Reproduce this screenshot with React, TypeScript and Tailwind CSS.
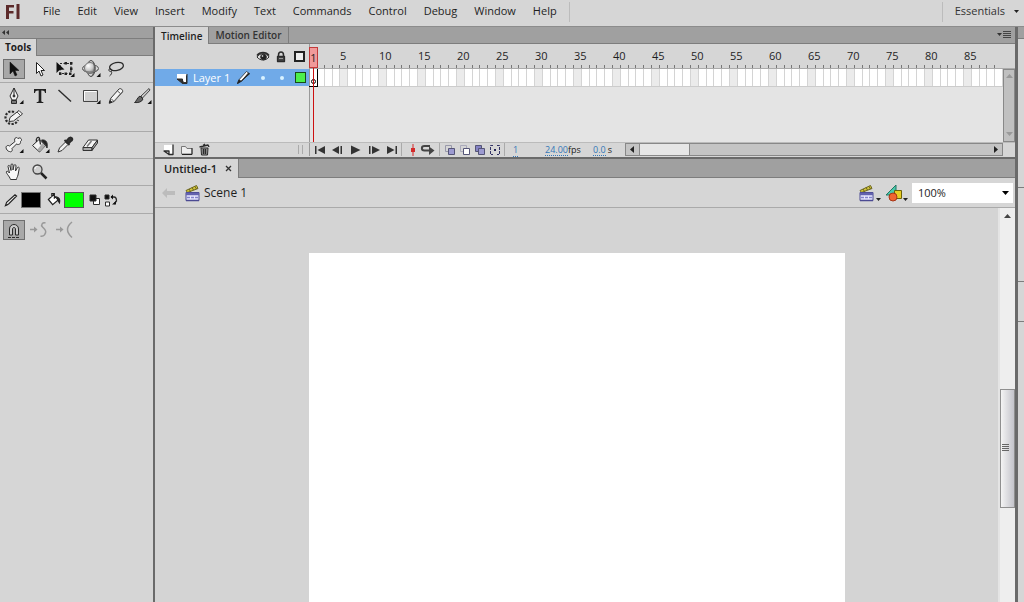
import React, { useState } from 'react';

const MENUS = ['File', 'Edit', 'View', 'Insert', 'Modify', 'Text', 'Commands', 'Control', 'Debug', 'Window', 'Help'];

// First frame of every numbered group on the ruler
const GROUPS = Array.from({ length: 17 }, (_, i) => (i + 1) * 5);

interface IconProps {
  children: React.ReactNode;
  size?: number;
}

const Icon: React.FC<IconProps> = ({ children, size = 20 }) => (
  <svg
    width={size}
    height={size}
    viewBox={`0 0 ${size} ${size}`}
    fill="none"
    stroke="#2b2b2b"
    strokeLinejoin="round"
    aria-hidden="true"
    className="shrink-0"
  >
    {children}
  </svg>
);

// Small triangle for tools that open a fly-out
const Flyout = () => <path d="M19.500 14v4h-4z" fill="#111" stroke="none" />;

const BucketIcon = () => (
  <Icon>
    <path d="M2.500 10.500L9 4.500l6.500 6L9.500 17z" fill="#f4f4f4" />
    <path d="M10 16.500l5.500-6-3-2.500-5 6.500z" fill="#aaa" stroke="none" />
    <path d="M6.500 7C5.500 2.500 8.500 1 9.500 3.500l1 6" strokeWidth="1.300" />
    <path d="M11.500 5c4.500-.5 6.500 2 5.500 8-.8-2-1.500-3.500-3-4.500z" fill="#222" />
    <Flyout />
  </Icon>
);

const TOOL_ICONS: Record<string, React.ReactNode> = {
  'Selection Tool': (
    <Icon><path d="M6 3v12l3-3 2 5 2-1-2-4.500h4z" fill="#111" stroke="#111" strokeWidth="0.5" /></Icon>
  ),
  'Subselection Tool': (
    <Icon><path d="M6.500 3.500v11l2.500-2.500 2 5 2-1-2-4.500h3.500z" fill="#fff" stroke="#222" /></Icon>
  ),
  'Free Transform Tool': (
    <Icon>
      <path d="M5 4.500h11v10H5z" strokeDasharray="2 1.500" strokeWidth="1.200" />
      <path d="M9.500 3h2.500v2.500H9.500zM15 3h2.500v2.500H15zM15 8.500h2.500V11H15zM4 13.500h2.500V16H4zM9.500 13.500H12V16H9.500zM14 13.500h2.500V16H14z" fill="#222" stroke="none" />
      <path d="M1.500 3v11l3-3 5-.5z" fill="#111" stroke="none" />
      <Flyout />
    </Icon>
  ),
  '3D Rotation Tool': (
    <Icon>
      <defs>
        <radialGradient id="ball" cx="0.35" cy="0.3" r="0.8">
          <stop offset="0" stopColor="#fff" />
          <stop offset="0.5" stopColor="#ccc" />
          <stop offset="1" stopColor="#666" />
        </radialGradient>
      </defs>
      <ellipse cx="9.500" cy="9.500" rx="8" ry="4" stroke="#555" />
      <ellipse cx="10" cy="9.500" rx="4" ry="8" stroke="#444" />
      <circle cx="9" cy="9" r="5.500" fill="url(#ball)" stroke="#777" />
      <path d="M12 3c2 3 2 9-1 14" stroke="#555" />
      <path d="M1.500 10c1 3.500 12 4.500 16 0" stroke="#777" />
      <Flyout />
    </Icon>
  ),
  'Lasso Tool': (
    <Icon>
      <ellipse cx="10.500" cy="7.500" rx="7" ry="4" transform="rotate(-12 10.500 7.500)" strokeWidth="1.300" />
      <path d="M4 9.500c-2 1-1 3.500 1 3 2-.8.500-3-1-2.500M5.500 12.500c.5 1.500 0 3-2 4.500" />
    </Icon>
  ),
  'Pen Tool': (
    <Icon>
      <path d="M10 2l-4 8 2 4h4l2-4z" fill="#f4f4f4" />
      <path d="M10 2v7" />
      <circle cx="10" cy="10" r="1" fill="#222" />
      <path d="M7.500 14.500h5v3h-5z" fill="#777" />
      <Flyout />
    </Icon>
  ),
  'Text Tool': (
    <Icon><path d="M4 3h12v4h-1c-.3-1.800-1-2.500-3-2.500h-.7v10c0 1 .5 1.500 2 1.500v1H6.700v-1c1.500 0 2-.5 2-1.500v-10H8c-2 0-2.700.7-3 2.500H4z" fill="#222" stroke="none" /></Icon>
  ),
  'Line Tool': (
    <Icon><path d="M3.500 4L16 15.500" strokeWidth="1.400" /></Icon>
  ),
  'Rectangle Tool': (
    <Icon>
      <rect x="2.500" y="4.500" width="14" height="11" fill="#d0d0d0" stroke="#444" />
      <path d="M3.500 5.500h12M3.500 5.500v9" stroke="#fff" />
      <Flyout />
    </Icon>
  ),
  'Pencil Tool': (
    <Icon>
      <path d="M3.500 17l1-4.500L13 3c1.500-1.300 4.500 1 3.500 3L8 15.500z" fill="#f4f4f4" stroke="#333" />
      <path d="M5 12.500l3 3M11.500 5l3.500 3" stroke="#555" />
      <path d="M8 15L16 6" stroke="#777" />
      <path d="M3.200 17.200l.8-2.700 2 1.700z" fill="#222" />
    </Icon>
  ),
  'Brush Tool': (
    <Icon>
      <path d="M17 2.500L9 10l1.500 2L18 4z" fill="#ccc" stroke="#444" />
      <path d="M8 10l3 3c-1 3-5 4-8.500 3.500 2-1 2.500-5 5.500-6.500z" fill="#666" />
      <Flyout />
    </Icon>
  ),
  'Deco Tool': (
    <Icon>
      <path d="M10 4C5 2 1.500 6 1.500 9c0 4 3 7 6 7 3 0 5.500-1.500 6.500-4" strokeWidth="2.200" strokeDasharray="2.200 1.400" />
      <path d="M5 13.500l1-4L15 2.500l3.500 3.500-9 7z" fill="#f4f4f4" stroke="#333" />
      <path d="M13 4l3.500 3.500" stroke="#555" />
    </Icon>
  ),
  'Bone Tool': (
    <Icon>
      <path d="M2.500 14c-1.500-2.500 1-4.500 3-3L11 6.500C9.500 4 12 1 14 3.500c2.500-2 5 1.500 2.500 3 .5 3-2.500 3.500-4 2.500L8 13.500c1 2.500-1 4-2.500 3-1 0-2.500-1-3-2.500z" fill="#f4f4f4" stroke="#333" />
      <path d="M7 14l5.500-5.500" stroke="#999" />
      <Flyout />
    </Icon>
  ),
  'Paint Bucket Tool': <BucketIcon />,
  'Eyedropper Tool': (
    <Icon>
      <path d="M3 17l1.500-4 6-6 2.500 2.500-6 6z" fill="#f0f0f0" stroke="#333" />
      <path d="M9.500 5l5 5M11 6.500C13 4 14 2 16 2.500s2 2.500-.5 4L13.500 9z" fill="#333" strokeWidth="1.800" />
    </Icon>
  ),
  'Eraser Tool': (
    <Icon>
      <path d="M2 12.500L7.500 5h9L11 12.500z" fill="#f6f6f6" stroke="#333" />
      <path d="M2 12.500h9v3H2zM11 12.500L16.500 5v3L11 15.500z" fill="#aaa" stroke="#333" />
      <path d="M6 11.500L10.500 6" stroke="#777" strokeWidth="1.500" />
    </Icon>
  ),
  'Hand Tool': (
    <Icon>
      <path d="M6.500 17.500C5.500 14 1.500 11 2.500 9.500c1-.8 2 .5 3 1.500L4 4.500C4 3 5.500 3 6 4.500l1 4V3c0-1.500 2-1.500 2 0v5l1-4.500c.5-1.500 2-1 2 .5l-.5 5 2-3.500c1-1 2 0 1.700 1.200L14 13c-.5 2-1.500 3-1.500 4.500z" fill="#f8f8f8" stroke="#333" />
    </Icon>
  ),
  'Zoom Tool': (
    <Icon>
      <circle cx="7.500" cy="7.500" r="4.500" fill="#d0d0d0" stroke="#444" strokeWidth="1.300" />
      <path d="M5 7c0-1.500 1-2.500 2.500-2.500" stroke="#fff" />
      <path d="M11 11l5.500 5.500" stroke="#222" strokeWidth="2.500" />
    </Icon>
  ),
};

const TOOL_GROUPS = [
  ['Selection Tool', 'Subselection Tool', 'Free Transform Tool', '3D Rotation Tool', 'Lasso Tool'],
  ['Pen Tool', 'Text Tool', 'Line Tool', 'Rectangle Tool', 'Pencil Tool', 'Brush Tool', 'Deco Tool'],
  ['Bone Tool', 'Paint Bucket Tool', 'Eyedropper Tool', 'Eraser Tool'],
  ['Hand Tool', 'Zoom Tool'],
];

const MenuBar = () => (
  <header className="flex h-[27px] shrink-0 items-center border-b border-[#8c8c8c] pb-[3px] text-[11px]">
    <svg width="18" height="18" viewBox="0 0 18 18" className="ml-1 shrink-0" role="img" aria-label="Flash">
      <path d="M2 2h8v2.500H5V8h4.500v2.500H5V16H2zM12.500 1h3v15h-3z" fill="#5c2a2a" />
    </svg>
    <nav className="ml-5 flex gap-[17px] border-r border-[#bcbcbc] pr-3 pl-px">
      {MENUS.map((menu) => (
        <button key={menu} type="button" className="h-5 whitespace-nowrap">{menu}</button>
      ))}
    </nav>
    <button type="button" className="ml-auto flex h-5 items-center gap-2 border-l border-[#bcbcbc] pr-1 pl-3 text-[11px] text-[#333]">
      Essentials
      <svg width="7" height="4" viewBox="0 0 7 4" aria-hidden="true"><path d="M1 0h5L3.500 3z" fill="#222" /></svg>
    </button>
  </header>
);

const ToolsPanel = () => {
  const [tool, setTool] = useState('Selection Tool');

  return (
    <aside className="flex w-[155px] shrink-0 flex-col border-r-2 border-[#6a6a6a]">
      <div className="flex h-3 items-center border-b border-[#7d7d7d] bg-[#a0a0a0] pl-[2px]">
        <svg width="8" height="5" viewBox="0 0 8 5" aria-hidden="true"><path d="M3 0v5L0 2.500zM7 0v5L4 2.500z" fill="#333" /></svg>
      </div>
      <div className="flex h-[17px] border-b border-[#7d7d7d] bg-[#a0a0a0]">
        <h2 className="-mb-px border-r border-[#7d7d7d] bg-[#d6d6d6] px-[5px] text-[10px] leading-4 font-bold">Tools</h2>
      </div>

      {TOOL_GROUPS.map((group) => (
        <div key={group[0]} className="grid grid-cols-6 gap-y-[2px] border-b border-[#aaa] py-[3px]">
          {group.map((name) => (
            <button
              key={name}
              type="button"
              aria-label={name}
              onClick={() => setTool(name)}
              className={
                tool === name
                  ? 'ml-[3px] flex h-5 w-[22px] items-center justify-center border border-[#6e6e6e] bg-[#a8a8a8]'
                  : 'ml-[3px] flex h-5 w-[22px] items-center justify-center'
              }
            >
              {TOOL_ICONS[name]}
            </button>
          ))}
        </div>
      ))}

      <div className="flex h-7 items-center border-b border-[#aaa] pl-[3px]">
        <svg width="16" height="16" viewBox="0 0 20 20" fill="#eee" stroke="#222" strokeWidth="1.400" aria-hidden="true">
          <path d="M3 17l1.500-4L15 3.500l2 1.500L7 15zM3 17l3-1" />
        </svg>
        <button type="button" aria-label="Stroke color" className="ml-[2px] h-4 w-5 border border-[#777] bg-black" />
        <div className="ml-1 flex">
          <svg width="17" height="17" viewBox="0 0 20 20" fill="#fff" stroke="#222" strokeWidth="1.400" aria-hidden="true">
            <path d="M4 10l6-5.500 5.500 6L9 16zM8 7V3h3v6" />
            <path d="M14 7c3 1 4 3 3 7l-2-3z" fill="#222" />
          </svg>
        </div>
        <button type="button" aria-label="Fill color" className="ml-[2px] h-4 w-5 border border-[#555] bg-[#00ff00]" />
        <button type="button" aria-label="Black and white" className="ml-1">
          <Icon size={14}><path d="M5.500 5.500h6v6h-6z" fill="#fff" /><path d="M2 2h6v6H2z" fill="#111" /></Icon>
        </button>
        <button type="button" aria-label="Swap colors" className="ml-[2px]">
          <Icon size={14}>
            <path d="M1 2h4v4H1z" fill="#111" />
            <path d="M1.500 9h4v4h-4z" fill="#fff" />
            <path d="M7 4h3c2 0 2.500 2 2.500 4L10 11" strokeWidth="1.300" />
            <path d="M9 1.500L6.500 4 9 6.500zM8 11.500h4V8z" fill="#111" stroke="none" />
          </Icon>
        </button>
      </div>

      <div className="grid grid-cols-6 py-[6px]">
        <button type="button" aria-label="Snap to Objects" className="ml-[3px] flex h-5 w-[22px] items-center justify-center border border-[#6e6e6e] bg-[#a8a8a8]">
          <Icon size={18}>
            <path d="M4.500 14V8c0-6 9-6 9 0v6h-3V8c0-2-3-2-3 0v6z" fill="#ccc" />
            <path d="M3 16.500h12" strokeDasharray="3 1" />
          </Icon>
        </button>
        <button type="button" aria-label="Smooth" className="flex items-center justify-center">
          <Icon>
            <path d="M2 9.500h5M17.500 3c-3-1-5 2-3 4s4 3 3 6-3.500 3.500-5 3" stroke="#999" strokeWidth="1.500" />
            <path d="M6 6.500v6L9.500 9.500z" fill="#999" stroke="none" />
          </Icon>
        </button>
        <button type="button" aria-label="Straighten" className="flex items-center justify-center">
          <Icon>
            <path d="M2 9.500h5M18 2c-6 5-6 10 0 15.500" stroke="#999" strokeWidth="1.500" />
            <path d="M6 6.500v6L9.500 9.500z" fill="#999" stroke="none" />
          </Icon>
        </button>
      </div>
    </aside>
  );
};

const Frames = ({ count }: { count: number }) => (
  <>
    {Array.from({ length: count }, (_, i) => (
      <span key={i} className={i === 0 && count === 5 ? 'flex-1 border-r border-[#d4d4d4] bg-[#ebebeb]' : 'flex-1 border-r border-[#d4d4d4] bg-white'} />
    ))}
  </>
);

const Ticks = ({ count }: { count: number }) => (
  <span className="flex h-[3px]">
    {Array.from({ length: count }, (_, i) => (
      <span key={i} className="flex-1 border-r border-[#777]" />
    ))}
  </span>
);

const LayerList = () => (
  <div className="flex w-[155px] shrink-0 flex-col border-r border-[#999]">
    <div className="flex h-[25px] items-center justify-end gap-1 pr-[2px]">
      <button type="button" aria-label="Show or hide all layers">
        <Icon size={14}>
          <path d="M1 7c2-4 10-5 12 0-3 4-9 4-12 0z" fill="#ddd" />
          <circle cx="7.500" cy="7" r="2.800" fill="#222" />
          <path d="M1 5.500c3-4 9-4 12 0" strokeWidth="1.500" />
          <circle cx="6.500" cy="6" r="0.800" fill="#fff" stroke="none" />
        </Icon>
      </button>
      <button type="button" aria-label="Lock or unlock all layers">
        <Icon size={14}>
          <path d="M4.500 7V5c0-4 5-4 5 0v2" strokeWidth="1.500" />
          <path d="M3.500 6.500h7v5h-7z" fill="#444" strokeWidth="1.300" />
          <path d="M5 8.500h4" stroke="#999" />
        </Icon>
      </button>
      <button type="button" aria-label="Show all layers as outlines" className="mx-[2px] size-[11px] border-2 border-[#222] bg-[#eee]" />
    </div>
    <div className="flex h-[17px] items-center bg-[#70aae8] pr-[3px] pl-5 text-white">
      <Icon size={14}>
        <path d="M2 3h10v9H8V8H2z" fill="#fff" stroke="none" />
        <path d="M12 3v9.500H7.500M2 8h5.500v4.500z" fill="#333" />
        <path d="M3 3h8v8H9V7H3z" fill="#fff" stroke="none" />
      </Icon>
      <span className="ml-1 text-[11px] leading-4 whitespace-nowrap">Layer 1</span>
      <svg width="15" height="15" viewBox="0 0 20 20" fill="#fff" stroke="#222" className="ml-[6px] shrink-0" aria-hidden="true">
        <path d="M2 18l2-5L14 2l4 3L7 15z" />
        <path d="M2 18l2-5 3 2zM7 15L18 5l-1.500-1z" fill="#222" />
      </svg>
      <span className="ml-auto size-1 rounded-full bg-[#d9f3ff]" />
      <span className="ml-[15px] size-1 rounded-full bg-[#d9f3ff]" />
      <button type="button" aria-label="Layer outline color" className="ml-[11px] size-[11px] border border-[#174b17] bg-[#4cf04c]" />
    </div>
    <div className="flex-1 bg-[#e4e4e4]" />
  </div>
);

const Ruler = () => (
  <div className="relative flex min-w-0 flex-1 flex-col">
    <div className="flex h-[25px] items-end overflow-hidden border-b border-[#aaa] text-[11px] leading-[18px]">
      <div className="w-[30px] shrink-0"><Ticks count={4} /></div>
      {GROUPS.map((n) => (
        <div key={n} className={n === 85 ? 'w-[31px] shrink-0' : 'w-[39px] shrink-0'}>
          {n}
          <Ticks count={n === 85 ? 4 : 5} />
        </div>
      ))}
    </div>
    <div className="flex min-h-0 flex-1">
      <div className="min-w-0 flex-1 bg-[#e4e4e4]">
        <div className="flex h-[18px] overflow-hidden border-b border-[#ccc] bg-white">
          <div className="flex w-[30px] shrink-0"><Frames count={4} /></div>
          {GROUPS.map((n) => (
            <div key={n} className="flex w-[39px] shrink-0"><Frames count={5} /></div>
          ))}
        </div>
      </div>
      <div className="flex w-3 flex-col items-center justify-between border border-[#888] bg-[#c0c0c0] py-1">
        <svg width="7" height="5" viewBox="0 0 7 5" aria-hidden="true"><path d="M0 4l3.500-4L7 4z" fill="#999" /></svg>
        <svg width="7" height="5" viewBox="0 0 7 5" aria-hidden="true"><path d="M0 0l3.500 4L7 0z" fill="#999" /></svg>
      </div>
    </div>

    {/* Playhead with the empty keyframe beneath it */}
    <div className="absolute top-[3px] bottom-0 -left-px w-[9px]">
      <div className="h-[21px] border border-[#c23a3a] bg-[#f09a9a] text-center text-[11px] leading-[19px]">1</div>
      <div className="mt-px flex h-[18px] items-end justify-center border-r border-b border-black pb-[2px]">
        <span className="size-[5px] rounded-full border border-black" />
      </div>
      <div className="absolute top-[21px] bottom-0 left-1 w-px bg-[#cc1111]" />
    </div>
  </div>
);

const ctl = 'flex w-[18px] shrink-0 items-center justify-center';
const onion = 'flex w-[15px] shrink-0 items-center justify-center';

const TimelineFooter = () => (
  <div className="flex h-[15px] shrink-0 items-stretch border-t border-[#bbb] pb-px text-[10px] leading-3">
    <div className="flex w-[155px] shrink-0 items-center gap-[5px] border-r border-[#999] pl-[7px]">
      <button type="button" aria-label="New Layer">
        <Icon size={13}><path d="M2 2h9v9H7V8H2z" fill="#fff" stroke="none" /><path d="M11 1.500v10H6.500M2 8h5v3.500z" strokeWidth="1.300" /></Icon>
      </button>
      <button type="button" aria-label="New Folder">
        <Icon size={13}><path d="M1.500 3.500h4l1.500 2h5v5.500h-10.500z" fill="#eee" stroke="#777" /><path d="M12 5v6.500H2" stroke="#222" /></Icon>
      </button>
      <button type="button" aria-label="Delete">
        <Icon size={13}><path d="M3 5h7l-.5 7h-6z" fill="#999" /><path d="M1.500 4L10 2l1 2M5 2.500l2-1.500M5.500 6v5M7.500 6v5" strokeWidth="1.400" /></Icon>
      </button>
      <span className="mr-[6px] ml-auto h-[9px] w-[5px] border-x border-[#aaa]" />
    </div>

    <div className="ml-px flex border-r border-[#aaa]">
      <button type="button" aria-label="Go to first frame" className={ctl}><Icon size={12}><path d="M1 2h1.500v8H1zM11 2v8L3.500 6z" fill="#333" stroke="none" /></Icon></button>
      <button type="button" aria-label="Step back one frame" className={ctl}><Icon size={12}><path d="M7 2v8L0 6zM8.500 2H10v8H8.500z" fill="#333" stroke="none" /></Icon></button>
      <button type="button" aria-label="Play" className={ctl}><Icon size={12}><path d="M1 1.500v9L10.500 6z" fill="#333" stroke="none" /></Icon></button>
      <button type="button" aria-label="Step forward one frame" className={ctl}><Icon size={12}><path d="M1 2h1.500v8H1zM4 2v8l8-4z" fill="#333" stroke="none" /></Icon></button>
      <button type="button" aria-label="Go to last frame" className={ctl}><Icon size={12}><path d="M1 2v8l7.500-4zM9.500 2H11v8H9.500z" fill="#333" stroke="none" /></Icon></button>
    </div>
    <div className="flex border-r border-[#aaa] pr-1 pl-[3px]">
      <button type="button" aria-label="Center Frame" className={onion}><Icon size={12}><path d="M6 0v12" stroke="#d42a2a" /><path d="M4 4h4v4H4z" fill="#d42a2a" stroke="none" /></Icon></button>
      <button type="button" aria-label="Loop" className={onion}><Icon size={15}><path d="M10 4H4.500c-3.500 0-3.500 4.500 0 4.500H10" stroke="#444" strokeWidth="2" /><path d="M9 4.500v8.500L14.500 8.500z" fill="#444" stroke="none" /></Icon></button>
    </div>
    <div className="flex border-r border-[#aaa] pr-[2px] pl-[2px]">
      <button type="button" aria-label="Onion Skin" className={onion}><Icon size={12}><path d="M1.500 1.500h6v6h-6z" stroke="#99a" /><path d="M4.500 4.500h6v6h-6z" fill="#9c9ad0" stroke="#557" /></Icon></button>
      <button type="button" aria-label="Onion Skin Outlines" className={onion}><Icon size={12}><path d="M1.500 1.500h6v6h-6z" stroke="#aab" /><path d="M4.500 4.500h6v6h-6z" fill="#fff" stroke="#557" /></Icon></button>
      <button type="button" aria-label="Edit Multiple Frames" className={onion}><Icon size={12}><path d="M1.500 1.500h6v6h-6z" fill="#8583c4" stroke="#557" /><path d="M4.500 4.500h6v6h-6z" fill="#9c9ad0" stroke="#557" /></Icon></button>
      <button type="button" aria-label="Modify Markers" className={onion}><Icon size={12}><path d="M4 1.500H1.500v9H4M8 1.500h2.500v9H8" strokeDasharray="3 1" stroke="#336" /><path d="M5 5h2v2H5z" fill="#225" stroke="none" /></Icon></button>
    </div>
    <div className="flex w-[120px] shrink-0 items-center pl-2 text-[#3478b8]">
      <button type="button" className="w-4 shrink-0 text-left text-[9px] leading-[11px]"><span className="border-b border-dotted border-[#3478b8]">1</span></button>
      <div className="ml-4 flex w-12 shrink-0 whitespace-nowrap">
        <button type="button" className="border-b border-dotted border-[#3478b8] text-[9px] leading-[11px]">24.00</button>
        <span className="text-[9px] leading-[11px] text-[#222]">fps</span>
      </div>
      <div className="flex gap-[2px] whitespace-nowrap">
        <button type="button" className="border-b border-dotted border-[#3478b8] text-[9px] leading-[11px]">0.0</button>
        <span className="text-[9px] leading-[11px] text-[#222]">s</span>
      </div>
    </div>
    <div className="flex min-w-0 flex-1 border border-[#888] bg-[#c4c4c4]">
      <button type="button" aria-label="Scroll left" className="flex w-[14px] items-center justify-center border-r border-[#888]">
        <svg width="5" height="7" viewBox="0 0 5 7" aria-hidden="true"><path d="M4 0v7L0 3.500z" fill="#222" /></svg>
      </button>
      <div className="w-[50px] border-r border-[#888] bg-[#e6e6e6]" />
      <button type="button" aria-label="Scroll right" className="ml-auto flex w-3 items-center justify-center">
        <svg width="5" height="7" viewBox="0 0 5 7" aria-hidden="true"><path d="M0 0v7l4-3.500z" fill="#222" /></svg>
      </button>
    </div>
    <div className="w-3 shrink-0" />
  </div>
);

const Timeline = () => (
  <section className="shrink-0">
    <div className="flex h-[17px] items-stretch border-b border-[#7d7d7d] bg-[#a0a0a0] text-[10px] leading-4 font-semibold">
      <button type="button" className="-mb-px border-r border-[#7d7d7d] bg-[#d6d6d6] px-[6px]">Timeline</button>
      <button type="button" className="border-r border-[#7d7d7d] px-[6px] text-[#333]">Motion Editor</button>
      <button type="button" aria-label="Panel menu" className="mr-1 ml-auto flex items-center">
        <svg width="14" height="8" viewBox="0 0 14 8" aria-hidden="true"><path d="M0 2h5L2.500 5z" fill="#333" /><path d="M6 .5h8M6 2.500h8M6 4.500h8M6 6.500h8" stroke="#444" /></svg>
      </button>
    </div>
    <div className="flex h-[98px]">
      <LayerList />
      <Ruler />
    </div>
    <TimelineFooter />
  </section>
);

const ClapperIcon = () => (
  <Icon size={18}>
    <path d="M2 6.500L12.500 1.500l1.500 3-10.500 4z" fill="#d2c53a" stroke="#6b651e" />
    <path d="M5 5l1.500 2.500M8 3.500L9.500 6M11 2.500L12.500 5" stroke="#6b651e" />
    <path d="M2 8.500h13v8H2z" fill="#e8e8ff" stroke="#4b4a92" />
    <path d="M2 10h13" stroke="#6362ae" strokeWidth="2.500" />
    <path d="M3 13.500h11" stroke="#8584cc" strokeWidth="1.500" strokeDasharray="3 1" />
    <path d="M2 16.500h13" stroke="#4b4a92" strokeWidth="1.500" />
  </Icon>
);

const DocumentArea = () => (
  <section className="flex min-h-0 flex-1 flex-col border-t-2 border-[#6a6a6a]">
    <div className="flex h-[19px] shrink-0 border-b border-[#7d7d7d] bg-[#a0a0a0]">
      <div className="-mb-px flex items-center gap-2 border-r border-[#7d7d7d] bg-[#d6d6d6] pr-[6px] pl-[9px]">
        <span className="text-[11px] leading-4 font-semibold">Untitled-1</span>
        <button type="button" aria-label="Close document">
          <svg width="7" height="7" viewBox="0 0 7 7" aria-hidden="true"><path d="M1 1l5 5M6 1L1 6" stroke="#333" strokeWidth="1.300" /></svg>
        </button>
      </div>
    </div>
    <div className="flex h-[30px] shrink-0 items-center border-b border-[#aaa] pl-[7px]">
      <button type="button" aria-label="Back">
        <svg width="13" height="10" viewBox="0 0 13 10" aria-hidden="true"><path d="M5 0v3h8v4H5v3L0 5z" fill="#bcbcbc" /></svg>
      </button>
      <a href="#scene-1" className="ml-2 flex items-center gap-[2px] pl-px text-xs">
        <ClapperIcon />
        Scene 1
      </a>
      <button type="button" aria-label="Edit Scene" className="ml-auto flex items-end">
        <ClapperIcon />
        <svg width="5" height="4" viewBox="0 0 5 4" aria-hidden="true"><path d="M0 0h5L2.500 3z" fill="#222" /></svg>
      </button>
      <button type="button" aria-label="Edit Symbols" className="ml-1 flex items-end">
        <Icon size={18}>
          <path d="M1 11L11 1v10z" fill="#48c8aa" stroke="#247765" />
          <path d="M9.500 6.500h7v8h-7z" fill="#e8cd22" stroke="#6d620b" />
          <circle cx="8" cy="13" r="4" fill="#f06430" stroke="#a63516" />
        </Icon>
        <svg width="5" height="4" viewBox="0 0 5 4" aria-hidden="true"><path d="M0 0h5L2.500 3z" fill="#222" /></svg>
      </button>
      <div className="relative mr-[2px] ml-1 w-[101px] bg-white">
        <select aria-label="Zoom" defaultValue="100" className="block h-5 w-full appearance-none pl-[6px] text-[11px] leading-5">
          <option value="50">50%</option>
          <option value="100">100%</option>
          <option value="200">200%</option>
        </select>
        <svg width="7" height="4" viewBox="0 0 7 4" className="pointer-events-none absolute top-2 right-1" aria-hidden="true"><path d="M0 0h7L3.500 4z" fill="#000" /></svg>
      </div>
    </div>

    <div className="flex min-h-0 flex-1">
      <main className="flex min-w-0 flex-1 justify-center bg-[#d4d4d4] pt-[45px]">
        <div className="w-[536px] bg-white" />
      </main>
      <div className="flex w-[17px] shrink-0 flex-col border-l-2 border-[#e4e4e4] bg-[#eee]">
        <button type="button" aria-label="Scroll up" className="flex h-4 items-center justify-center">
          <svg width="7" height="4" viewBox="0 0 7 4" aria-hidden="true"><path d="M0 4l3.500-4L7 4z" fill="#444" /></svg>
        </button>
        <div className="flex-[7]" />
        <div className="flex h-[119px] items-center justify-center border border-[#8f8f8f] bg-linear-to-r from-[#f4f4f4] to-[#c4c4cb] pr-1">
          <svg width="7" height="8" viewBox="0 0 7 8" aria-hidden="true"><path d="M0 .5h7M0 2.500h7M0 4.500h7M0 6.500h7" stroke="#666" /></svg>
        </div>
        <div className="flex-[4]" />
      </div>
    </div>
  </section>
);

export default function App() {
  return (
    <div className="flex h-screen flex-col overflow-hidden bg-[#d6d6d6] font-['Open_Sans','Noto_Sans',sans-serif] text-[#1e1e1e]">
      <MenuBar />
      <div className="flex min-h-0 flex-1">
        <ToolsPanel />
        <div className="flex min-w-0 flex-1 flex-col">
          <Timeline />
          <DocumentArea />
        </div>
        {/* Collapsed dock */}
        <aside className="flex w-[9px] shrink-0 flex-col border-l-3 border-[#6a6a6a]">
          <div className="h-3 border-b border-[#7d7d7d] bg-[#a0a0a0]" />
          <div className="h-[149px] border-b border-[#7d7d7d]" />
          <div className="h-[94px] border-b border-[#7d7d7d]" />
          <div className="h-10 border-b border-[#7d7d7d]" />
        </aside>
      </div>
    </div>
  );
}
